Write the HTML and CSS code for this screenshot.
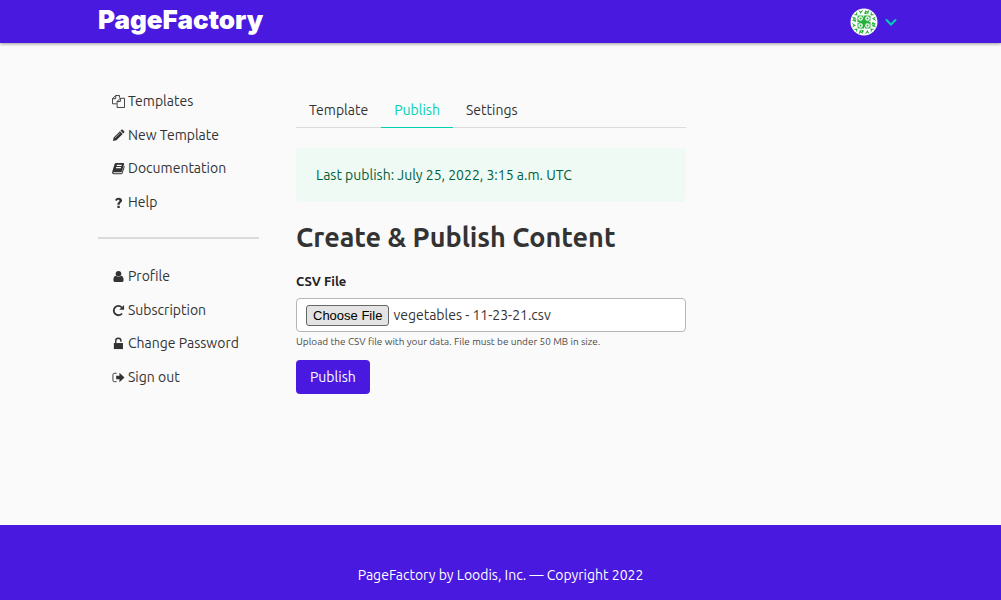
FILE: index.html
```html
<!DOCTYPE html>
<html lang="en">
<head>
<meta charset="utf-8">
<meta name="viewport" content="width=device-width, initial-scale=1">
<title>PageFactory</title>
<link rel="stylesheet" href="styles.css">
</head>
<body>
<header class="topbar">
  <div class="container topbar-inner">
    <a class="brand" href="#">PageFactory</a>
    <button class="account" type="button" aria-label="Account menu">
      <svg class="avatar" viewBox="0 0 28 28" aria-hidden="true">
        <defs>
          <clipPath id="round"><circle cx="14" cy="14" r="13.5"/></clipPath>
          <g id="quarter">
            <path d="M8.500 7.500H14V14H7.500V8.500z"/>
            <path d="M13.500 1.500 10.500 6 8.500 2l2 1.500zM7 3l.5 4.500L3 7l3-1zM1.500 8.500l5 1.500-4.500 3 1.500-2.500zM14 5.500l1.500-3 1.500 4z"/>
            <circle cx="10.500" cy="10.500" r="2.300" fill="#fff"/>
            <circle cx="10.500" cy="10.500" r="1"/>
            <path d="M12.300 7.500H14v2z" fill="#fff"/>
          </g>
        </defs>
        <circle cx="14" cy="14" r="13.5" fill="#fff"/>
        <g clip-path="url(#round)" fill="#25b03c">
          <use href="#quarter"/>
          <use href="#quarter" transform="rotate(90 14 14)"/>
          <use href="#quarter" transform="rotate(180 14 14)"/>
          <use href="#quarter" transform="rotate(270 14 14)"/>
        </g>
      </svg>
      <svg class="chevron" viewBox="0 0 12 8" aria-hidden="true"><path d="M1.500 2 6 6.500l4.500-4.500"/></svg>
    </button>
  </div>
</header>

<div class="container layout">
  <nav class="sidebar" aria-label="Main">
    <ul class="menu">
      <li><a href="#"><svg class="icon line" viewBox="0 0 14 14" aria-hidden="true"><path d="M5 9.500H.500V4L4 .500h4V3M4 .500V4H.500M9 3.500h4.500v10h-8V7zM9 3.500V7H5.500"/></svg>Templates</a></li>
      <li><a href="#"><svg class="icon" viewBox="0 0 14 14" aria-hidden="true"><path d="M1 13l.8-3.800L8.500 2.500l3 3-6.700 6.700zM9.200 1.800l.9-.9q.7-.6 1.400 0l1.600 1.600q.6.7 0 1.400l-.9.9z"/><path d="M3 9.700 8.600 4.100" stroke="#fafafa" stroke-width=".6"/></svg>New Template</a></li>
      <li><a href="#"><svg class="icon" viewBox="0 0 14 14" aria-hidden="true"><path fill-rule="evenodd" d="M4.500 1H12q1.300.1 1 1.400L10.700 10q-.3 1-1.400 1H2q-.8.100-.8.700.1.500.9.500h7.500q.7 0 .9-.7L13 4q.9.400.6 1.400L11.400 12q-.4 1.200-1.600 1.200H2Q0 13 0 11.200L2.700 2.500Q3.200 1 4.500 1zM5.300 3 5 4.200h5.200l.3-1.200zM4.600 5.500l-.3 1.100h5.200l.3-1.100z"/></svg>Documentation</a></li>
      <li><a href="#"><svg class="icon" viewBox="0 0 14 14" aria-hidden="true"><path d="M5.800 10.500h2.500V13H5.800zM3.200 4.200Q4.500 1.800 7.200 1.800c2 0 3.700 1.200 3.700 3 0 2.300-2.600 2.400-2.600 4.200v.4H5.800v-.8c0-2 2.200-2.300 2.200-3.600 0-.7-.5-.9-1.100-.9-.8 0-1.300.5-1.900 1.300z"/></svg>Help</a></li>
    </ul>
    <hr class="divider">
    <ul class="menu">
      <li><a href="#"><svg class="icon" viewBox="0 0 14 14" aria-hidden="true"><circle cx="7" cy="4" r="3"/><path d="M4 6.200q3 2.400 6 0c1.800.3 2.500 2.200 2.500 4.600 0 1.400-.8 2.200-2 2.200h-7c-1.200 0-2-.8-2-2.200 0-2.400.7-4.300 2.500-4.600z"/></svg>Profile</a></li>
      <li><a href="#"><svg class="icon" viewBox="0 0 14 14" aria-hidden="true"><path d="M10.800 10.200A5 5 0 1 1 10.500 3.600" fill="none" stroke="currentColor" stroke-width="2"/><path d="M13 1v5.200H7.800z"/></svg>Subscription</a></li>
      <li><a href="#"><svg class="icon" viewBox="0 0 14 14" aria-hidden="true"><path d="M4 7V4.200a2.800 2.800 0 0 1 5.600 0V5" fill="none" stroke="currentColor" stroke-width="1.500"/><path d="M2 6.500h9.800V13H2z"/></svg>Change Password</a></li>
      <li><a href="#"><svg class="icon" viewBox="0 0 14 14" aria-hidden="true"><path d="M5 2.500H2.500Q1 2.500 1 4v6q0 1.500 1.500 1.500H5" fill="none" stroke="currentColor"/><path d="M4.500 5H8V2l5.500 5L8 12V9H4.500z"/></svg>Sign out</a></li>
    </ul>
  </nav>

  <main class="content">
    <nav class="tabs" aria-label="Template sections">
      <a class="tab" href="#">Template</a>
      <a class="tab active" href="#" aria-current="page">Publish</a>
      <a class="tab" href="#">Settings</a>
    </nav>
    <p class="notice">Last publish: July 25, 2022, 3:15 a.m. UTC</p>
    <h1 class="title">Create &amp; Publish Content</h1>
    <form class="form">
      <label class="label" for="csv">CSV File</label>
      <input class="file" id="csv" type="file" accept=".csv" aria-describedby="csv-help">
      <p class="help" id="csv-help">Upload the CSV file with your data. File must be under 50 MB in size.</p>
      <button class="button" type="submit">Publish</button>
    </form>
  </main>
</div>

<footer class="footer">PageFactory by Loodis, Inc. — Copyright 2022</footer>
<script src="app.js"></script>
</body>
</html>
```
FILE: styles.css
```css
* { box-sizing: border-box; }

body {
  margin: 0;
  min-height: 100vh;
  display: flex;
  flex-direction: column;
  background: #fafafa;
  color: #333;
  font: 14px/20px Ubuntu, "Noto Sans", sans-serif;
}

a { color: inherit; text-decoration: none; }

.container {
  width: 100%;
  max-width: 1100px;
  margin: 0 auto;
  padding: 0 98px;
}

.topbar {
  background: #4a19df;
  box-shadow: 0 1px 3px rgba(10, 10, 10, 0.4);
}

.topbar-inner {
  display: flex;
  align-items: center;
  justify-content: space-between;
  min-height: 43px;
}

.brand {
  padding-bottom: 3px;
  color: #fff;
  font: 900 26px/40px Inter, sans-serif;
}

.account {
  display: flex;
  align-items: center;
  gap: 7px;
  padding: 0 6px;
  border: 0;
  background: none;
}

.avatar { width: 28px; height: 28px; }

.chevron {
  width: 12px;
  height: 8px;
  fill: none;
  stroke: #00d1b2;
  stroke-width: 2;
  stroke-linecap: round;
}

.layout {
  flex: 1;
  display: grid;
  grid-template-columns: 161fr 390fr 180fr;
  gap: 37px;
  align-items: start;
}

.sidebar { padding-top: 42px; }

.menu {
  margin: 0;
  padding: 0;
  list-style: none;
}

.menu a {
  display: flex;
  align-items: center;
  gap: 3px;
  padding: 7px 14px;
  line-height: 19px;
  white-space: nowrap;
}

.menu li:nth-child(odd) { padding-bottom: 1px; }

.icon {
  flex: none;
  width: 13px;
  height: 13px;
  fill: currentColor;
}

.icon.line { fill: none; stroke: currentColor; }

.divider {
  height: 2px;
  margin: 18px 0 21px;
  border: 0;
  background: #dbdbdb;
}

.content { padding-top: 49px; }

.tabs {
  display: flex;
  margin-bottom: 20px;
  border-bottom: 1px solid #dbdbdb;
}

.tab {
  margin-bottom: -1px;
  padding: 8px 13px 7px;
  border-bottom: 1px solid transparent;
}

.tab.active {
  color: #00d1b2;
  border-color: #00d1b2;
}

.notice {
  margin: 0 0 17px;
  padding: 17px 20px;
  border-radius: 4px;
  background: #effaf5;
  color: #00603a;
}

.title {
  margin: 0 0 16px;
  font-size: 27px;
  font-weight: 700;
  line-height: 36px;
}

.form {
  display: flex;
  flex-direction: column;
  align-items: flex-start;
}

.label {
  margin-bottom: 7px;
  color: #222;
  font-size: 13px;
  font-weight: 700;
}

.file {
  width: 100%;
  padding: 6px 9px 5px;
  border: 1px solid #b5b5b5;
  border-radius: 4px;
  background: #fff;
  color: #333;
  font: inherit;
}

.file::file-selector-button {
  padding: 1px 6px;
  border: 1px solid #666;
  border-radius: 3px;
  background: #e4e4e4;
  color: #000;
  font: 13px/17px "Liberation Sans", sans-serif;
}

.help {
  margin: 2px 0 10px;
  font-size: 10px;
  line-height: 16px;
  color: #4a4a4a;
}

.button {
  padding: 7px 14px;
  border: 0;
  border-radius: 4px;
  background: #4a19df;
  color: #fff;
  font: inherit;
}

.footer {
  padding: 40px 24px 15px;
  background: #4a19df;
  color: #fff;
  text-align: center;
}
```
FILE: app.js
```js
const selection = new DataTransfer();
selection.items.add(new File([""], "vegetables - 11-23-21.csv", { type: "text/csv" }));
document.getElementById("csv").files = selection.files;
```
